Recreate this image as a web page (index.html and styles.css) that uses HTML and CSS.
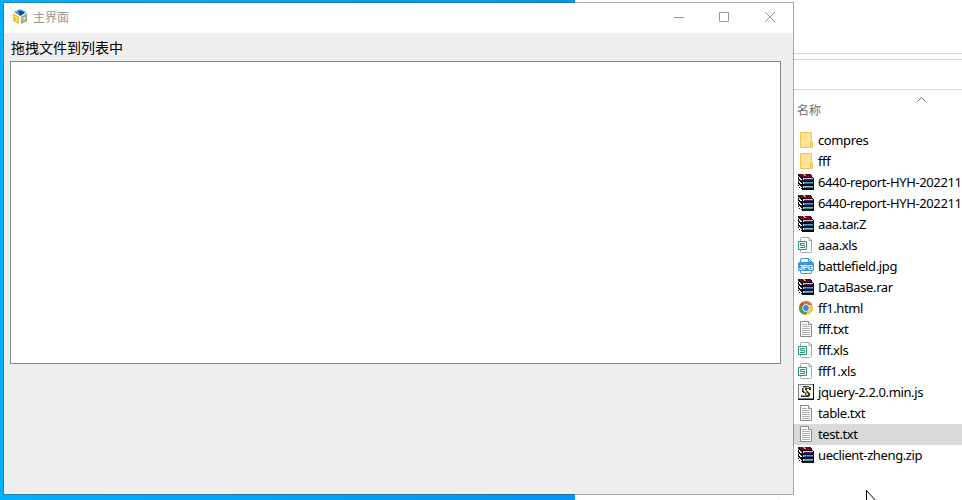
FILE: index.html
```html
<!DOCTYPE html>
<html lang="zh-CN">
<head>
  <meta charset="UTF-8">
  <title>主界面</title>
  <link rel="stylesheet" href="styles.css">
</head>
<body>

  <svg class="icon-defs">
    <symbol id="folder" viewBox="0 0 16 16">
      <path d="M2.500.5h11v9h1v6h-12z" fill="#ffe08d" stroke="#efc75e"/>
      <path d="M3 14 12 3v12H3z" fill="#ffe7a6" opacity=".55"/>
      <path d="M12.500 15.500v-4l1-2" fill="none" stroke="#f2c04d"/>
    </symbol>
    <symbol id="rar" viewBox="0 0 16 16" shape-rendering="crispEdges">
      <path d="M0 0h13v1h1v2h1v1h1v12H4v-1H3v-1H1v-2H0z" fill="#0c0c14"/>
      <path d="M1 0h12v1h1v2H3V2H2V1H1z" fill="#65052e"/>
      <path d="M5 0h2v1H5zM6 1h2v1H6z" fill="#eda51c"/>
      <path d="M5 4h10v1H5z" fill="#d9b5e0"/>
      <path d="M5 5h10v1H5z" fill="#66156f"/>
      <path d="M5 8h10v1H5z" fill="#4ba0e4"/>
      <path d="M5 9h10v1H5z" fill="#1261ae"/>
      <path d="M5 12h10v1H5z" fill="#7fc0bd"/>
      <path d="M5 13h10v1H5z" fill="#318e98"/>
      <path d="M1 3h1v1h1v1h1v1H2V5H1zM1 7h1v1h1v1h1v1H2V9H1zM1 11h1v1h1v1h1v1H2v-1H1z" fill="#f1f1f5"/>
      <path d="M0 2h1v1H0zM0 6h1v1H0zM0 10h1v1H0z" fill="#b8b8c4"/>
      <path d="M5 4h1v2H5zM5 8h1v2H5zM5 12h1v2H5z" fill="#e8d370"/>
    </symbol>
    <symbol id="xls" viewBox="0 0 16 16">
      <path d="M2.500 4V1.500q0-1 1-1h7.500l2.500 2.500v11.500q0 1-1 1h-9q-1 0-1-1V13" fill="#fff" stroke="#a5aaa8"/>
      <path d="M11 1v2.500h2.500" fill="none" stroke="#a5aaa8"/>
      <path d="M.5 4.500h8v8h-8z" fill="#fff" stroke="#24967b"/>
      <path d="M7 6.500H2.500v2h4v2H2" fill="none" stroke="#24967b"/>
    </symbol>
    <symbol id="chrome" viewBox="0 0 16 16">
      <circle cx="8" cy="8" r="7" fill="#f9c440"/>
      <path d="M8 8 2 4.400A7 7 0 0 1 14 4.400V5H8z" fill="#d8713a"/>
      <path d="M2 4.400A7 7 0 0 0 7.300 15L10.500 9.800 8 8z" fill="#4b9e50"/>
      <path d="M2 4.400A7 7 0 0 1 5 1.700L6 5 3.500 7z" fill="#c94a3a"/>
      <circle cx="8" cy="8" r="3.700" fill="#fff"/>
      <circle cx="8" cy="8" r="2.900" fill="#3d86e8"/>
    </symbol>
    <symbol id="txt" viewBox="0 0 16 16">
      <path d="M2.500.5h8l3 3v12h-11z" fill="#fff" stroke="#898989"/>
      <path d="M10.500.5v3h3" fill="#fff" stroke="#898989"/>
      <path d="M4 3.500h5M4 5.500h8M4 7.500h8M4 9.500h8M4 11.500h8M4 13.500h8" stroke="#b0b0b0"/>
    </symbol>
    <symbol id="js" viewBox="0 0 16 16" shape-rendering="crispEdges">
      <path d="M0 0h16v16H0z" fill="#111"/>
      <path d="M0 0h15v15H0z" fill="#777f83"/>
      <path d="M1 1h14v13H1z" fill="#f5f6f3"/>
      <path d="M5 2h6v1h2v3h-2V5H9v2h1v1h1v1h1v3h-1v1H3v-2h4V9H5V8H4V4h1z" fill="#333"/>
      <path d="M5 3h4v1H7v2h1v1h1v2h1v2H8V9H7V8H6V7H5zM4 11h4v1H4z" fill="#dda01b"/>
      <path d="M6 4h1v2h1v2H7V7H6zM9 3h2v1H9zM8 10h2v1H8z" fill="#fff5bc"/>
    </symbol>
  </svg>

  <div class="desktop">

    <!-- 资源管理器 -->
    <div class="explorer">
      <div class="ribbon"></div>
      <div class="address-bar"></div>
      <div class="files">
        <div class="column-head">
          <span>名称</span>
          <svg class="sort" viewBox="0 0 9 5"><path d="M.5 4.500l4-4 4 4"/></svg>
        </div>
        <div class="file"><svg><use href="#folder"/></svg>compres</div>
        <div class="file"><svg><use href="#folder"/></svg>fff</div>
        <div class="file"><svg><use href="#rar"/></svg>6440-report-HYH-202211</div>
        <div class="file"><svg><use href="#rar"/></svg>6440-report-HYH-202211</div>
        <div class="file"><svg><use href="#rar"/></svg>aaa.tar.Z</div>
        <div class="file"><svg><use href="#xls"/></svg>aaa.xls</div>
        <div class="file">
          <svg class="jpg" viewBox="0 0 16 16">
            <path d="M2.500 5V2q0-1.500 1.500-1.500h6.500l3 3V5M2.500 13v1q0 1.500 1.500 1.500h8q1.500 0 1.500-1.500v-1" fill="#fff" stroke="#3b95de"/>
            <path d="M10.500.5v3h3" fill="none" stroke="#3b95de"/>
            <rect y="4" width="16" height="9" rx="1.500" fill="#3b95de"/>
            <text x="8" y="11.500" text-anchor="middle">JPG</text>
          </svg>battlefield.jpg
        </div>
        <div class="file"><svg><use href="#rar"/></svg>DataBase.rar</div>
        <div class="file"><svg><use href="#chrome"/></svg>ff1.html</div>
        <div class="file"><svg><use href="#txt"/></svg>fff.txt</div>
        <div class="file"><svg><use href="#xls"/></svg>fff.xls</div>
        <div class="file"><svg><use href="#xls"/></svg>fff1.xls</div>
        <div class="file"><svg><use href="#js"/></svg>jquery-2.2.0.min.js</div>
        <div class="file"><svg><use href="#txt"/></svg>table.txt</div>
        <div class="file selected"><svg><use href="#txt"/></svg>test.txt</div>
        <div class="file"><svg><use href="#rar"/></svg>ueclient-zheng.zip</div>
      </div>
    </div>

    <!-- 主窗口 -->
    <div class="window">
      <div class="title-bar">
        <svg class="app-icon" viewBox="0 0 16 16">
          <path d="M8 0l6 3-6 4-6-4z" fill="#54a5c5"/>
          <path d="M6 2h4l3 2-5 3z" fill="#0d4c91"/>
          <path d="M1 4l6 4v7l-6-3z" fill="#f2c62e"/>
          <path d="M15 4L9 8v7l6-3z" fill="#93a58a"/>
          <path d="M3 7l2 2v3M10 10l3-2v2l-2 2" fill="none" stroke="#fff5c6"/>
        </svg>
        <span class="title">主界面</span>
        <div class="controls">
          <svg viewBox="0 0 12 12"><path d="M1 6.500h10"/></svg>
          <svg viewBox="0 0 12 12"><path d="M1.500 1.500h9v9h-9z"/></svg>
          <svg viewBox="0 0 12 12"><path d="M1 1l10 10M11 1L1 11"/></svg>
        </div>
      </div>
      <div class="content">
        <div class="hint">拖拽文件到列表中</div>
        <div class="list-box"></div>
      </div>
    </div>

    <svg class="cursor" viewBox="0 0 12 19"><path d="M.5.500v17l4-4 3 5 2-1-3-5h5z"/></svg>
  </div>

</body>
</html>
```
FILE: styles.css
```css
body {
  margin: 0;
  overflow: hidden;
  font-family: "Noto Sans", "Noto Sans CJK SC", sans-serif;
  font-size: 12px;
  color: #000;
}

.icon-defs {
  position: absolute;
  width: 0;
  height: 0;
}

.jpg text {
  font: bold 7.5px "Liberation Sans", sans-serif;
  letter-spacing: -0.2px;
  fill: #fff;
}

.desktop {
  position: relative;
  width: 962px;
  height: 500px;
  overflow: hidden;
  background: linear-gradient(90deg, #00b0ff, #0096f5 575px);
}

/* Explorer */
.explorer {
  position: absolute;
  top: 0;
  left: 575px;
  width: 387px;
  height: 500px;
  background: #fff;
}

.ribbon {
  height: 53px;
  border-bottom: 1px solid #d9d9d9;
}

.address-bar {
  height: 29px;
  margin-top: 5px;
  border-top: 1px solid #d9d9d9;
  border-bottom: 1px solid #d9d9d9;
}

.files {
  margin-left: 203px;
  height: 410px;
  border-left: 1px solid #f3f3f3;
}

.column-head {
  display: flex;
  height: 40px;
  padding-left: 18px;
  color: #6d6d6d;
}

.column-head span {
  width: 120px;
  line-height: 42px;
}

.sort {
  width: 9px;
  height: 5px;
  margin-top: 7px;
  fill: none;
  stroke: #666;
}

.file {
  display: flex;
  align-items: center;
  height: 21px;
  padding-left: 19px;
  font-size: 13px;
  letter-spacing: -0.38px;
  line-height: 21px;
  white-space: nowrap;
}

.file svg {
  flex: none;
  width: 16px;
  height: 16px;
  margin-right: 4px;
  margin-bottom: 1px;
}

.file.selected {
  background: #d9d9d9;
}

/* Main window */
.window {
  position: absolute;
  top: 2px;
  left: 3px;
  box-sizing: border-box;
  width: 791px;
  height: 493px;
  border: 1px solid rgba(80, 80, 80, 0.5);
  background: #efefef;
  background-clip: padding-box;
}

.title-bar {
  display: flex;
  align-items: center;
  height: 30px;
  padding-left: 8px;
  background: #fff;
}

.app-icon {
  width: 16px;
  height: 16px;
  margin-bottom: 2px;
}

.title {
  margin-left: 5px;
  margin-bottom: 2px;
  color: #999;
}

.controls {
  display: flex;
  gap: 33px;
  margin-left: auto;
  margin-right: 17px;
  margin-bottom: 2px;
}

.controls svg {
  width: 12px;
  height: 12px;
  fill: none;
  stroke: #999;
}

.controls svg:last-child {
  margin-left: 1px;
}

.content {
  padding: 5px 0 0 6px;
}

.hint {
  height: 23px;
  padding-left: 1px;
  font-size: 14px;
  line-height: 20px;
}

.list-box {
  box-sizing: border-box;
  width: 771px;
  height: 303px;
  border: 1px solid #828790;
  background: #fff;
}

.cursor {
  position: absolute;
  top: 490px;
  left: 866px;
  width: 12px;
  height: 19px;
  fill: #fff;
  stroke: #000;
}
```
